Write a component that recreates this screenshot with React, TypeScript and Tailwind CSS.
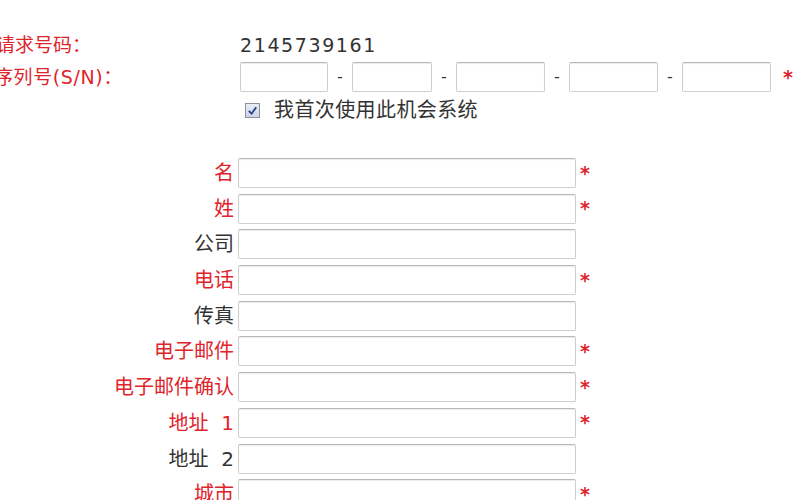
const RED = 'text-[#e0242b]'

function Box({ w }: { w: string }) {
  return (
    <div
      className={`${w} h-[30px] border border-[#cfcfcf] border-t-[#b8b8b8] bg-white shadow-[inset_0_1px_1px_rgba(0,0,0,0.08)] rounded-[2px]`}
    />
  )
}

export default function App() {
  const fields = [
    { label: '名', req: true },
    { label: '姓', req: true },
    { label: '公司', req: false },
    { label: '电话', req: true },
    { label: '传真', req: false },
    { label: '电子邮件', req: true },
    { label: '电子邮件确认', req: true },
    { label: '地址 1', req: true },
    { label: '地址 2', req: false },
    { label: '城市', req: true },
  ]

  return (
    <div
      className="w-[800px] h-[500px] overflow-hidden bg-white text-[#333] text-[20px] leading-none"
      style={{ fontFamily: '"DejaVu Sans", "Noto Sans CJK SC", sans-serif' }}
    >
      <div className="pt-[35px]">
        <div className="flex items-center h-[20px]">
          <div className={`w-[240px] -ml-[4px] ${RED} text-[19px]`}>请求号码：</div>
          <div className="ml-[4px] tracking-[1.6px] text-[19px]">2145739161</div>
        </div>

        <div className="flex items-center mt-[7px] h-[30px]">
          <div className={`w-[240px] -ml-[6px] ${RED} text-[19px] tracking-[0.6px]`}>序列号(S/N)：</div>
          <div className="ml-[6px] flex items-center">
            <Box w="w-[88px]" />
            <span className="w-[24px] text-center text-[16px]">-</span>
            <Box w="w-[80px]" />
            <span className="w-[24px] text-center text-[16px]">-</span>
            <Box w="w-[89px]" />
            <span className="w-[24px] text-center text-[16px]">-</span>
            <Box w="w-[89px]" />
            <span className="w-[24px] text-center text-[16px]">-</span>
            <Box w="w-[89px]" />
            <span className={`ml-[12px] ${RED} text-[19px] font-bold`}>*</span>
          </div>
        </div>

        <div className="flex items-center mt-[8px] ml-[245px] h-[20px]">
          <div className="w-[15px] h-[15px] border border-[#8f8f9d] bg-gradient-to-b from-[#e8edf5] to-[#cdd6e6] flex items-center justify-center">
            <svg viewBox="0 0 12 12" className="w-[11px] h-[11px]">
              <path d="M2 6.5 L5 9.5 L10 2.5" fill="none" stroke="#2a3f8f" strokeWidth="2" />
            </svg>
          </div>
          <span className="ml-[14px] tracking-[0.4px]">我首次使用此机会系统</span>
        </div>

        <div className="mt-[38px] flex flex-col gap-[5.7px]">
          {fields.map((f) => (
            <div key={f.label} className="flex items-center h-[30px]">
              <div
                className={`w-[234px] text-right whitespace-pre ${f.req ? RED : 'text-[#333]'}`}
              >
                {f.label.replace(' ', '  ')}
              </div>
              <div className="ml-[4px]">
                <Box w="w-[338px]" />
              </div>
              {f.req && <span className={`ml-[4px] ${RED} text-[19px] font-bold`}>*</span>}
            </div>
          ))}
        </div>
      </div>
    </div>
  )
}
